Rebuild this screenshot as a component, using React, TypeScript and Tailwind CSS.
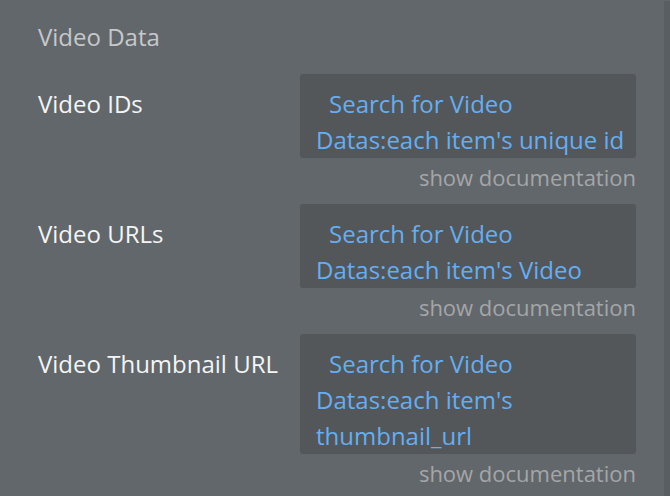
import React from "react";

const rows = [
  { label: "Video IDs", value: "Search for Video Datas:each item's unique id" },
  { label: "Video URLs", value: "Search for Video Datas:each item's Video" },
  { label: "Video Thumbnail URL", value: "Search for Video Datas:each item's thumbnail_url" },
];

export default function App() {
  return (
    <div
      className="flex h-[496px] w-[670px] overflow-hidden bg-[#62676b]"
      style={{ fontFamily: '"Open Sans", sans-serif' }}
    >
      <div className="flex-1 pl-[38px] pr-[28px] pt-[19px]">
        <div className="text-[24px] leading-[36px] text-[#c6c8ca]">Video Data</div>
        <div className="mt-[19px] flex flex-col">
          {rows.map((r) => (
            <div key={r.label} className="flex">
              <div className="w-[262px] pt-[12px] text-[24px] leading-[36px] text-[#f4f5f5]">
                {r.label}
              </div>
              <div className="flex w-[336px] flex-col">
                <div className="rounded-[3px] bg-[#535759] pb-0 pl-[16px] pr-[6px] pt-[12px] text-[24px] leading-[36px] text-[#66aef2] [text-indent:13px]">
                  {r.value}
                </div>
                <div className="h-[46px] pt-[1px] text-right text-[22px] leading-[36px] text-[#a4a6a8]">
                  show documentation
                </div>
              </div>
            </div>
          ))}
        </div>
      </div>
      <div className="mt-[1px] w-[6px] bg-[#595e62]" />
    </div>
  );
}
